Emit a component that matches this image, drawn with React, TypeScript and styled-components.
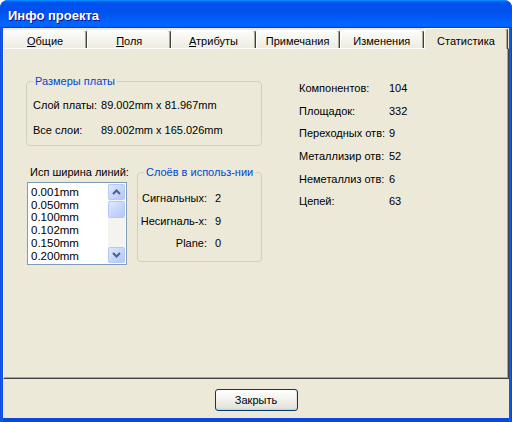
import React from 'react';
import styled, { createGlobalStyle } from 'styled-components';

const GlobalStyle = createGlobalStyle`
  html, body {
    margin: 0;
    padding: 0;
    background: #ffffff;
  }
  body {
    font-family: "Liberation Sans", Arial, sans-serif;
    font-size: 11px;
    color: #000;
    white-space: nowrap;
  }
`;

const Window = styled.div`
  width: 512px;
  height: 422px;
  display: flex;
  flex-direction: column;
  background: linear-gradient(90deg, #0831d9 0, #166aee 1px, #0a46e0 3px, #0a46e0 509px, #166aee 510px, #0831d9 512px);
  border-radius: 8px 8px 0 0;
  overflow: hidden;
`;

const TitleBar = styled.div`
  height: 28px;
  flex: none;
  display: flex;
  align-items: center;
  padding-left: 8px;
  background: linear-gradient(180deg, #0997ff, #0053ee 8%, #0050ee 40%, #0066ff 88%, #0066ff 93%, #005bff 95%, #003dd7 96%, #003dd7);
`;

const Title = styled.span`
  font-family: "Liberation Sans", Arial, sans-serif;
  font-weight: bold;
  font-size: 13px;
  color: #fff;
  text-shadow: 1px 1px #0f1089;
  margin-top: 2px;
`;

const Body = styled.div`
  flex: 1;
  margin: 0 3px 4px 3px;
  background: #ece9d8;
  display: flex;
  flex-direction: column;
`;

const TabStrip = styled.div`
  height: 20px;
  flex: none;
  display: flex;
  align-items: flex-end;
  padding-right: 1px;
  position: relative;
  z-index: 1;
`;

const Tab = styled.div<{ $active?: boolean }>`
  flex: 1;
  box-sizing: border-box;
  height: ${(p) => (p.$active ? 21 : 18)}px;
  margin-bottom: ${(p) => (p.$active ? -1 : 0)}px;
  padding-top: ${(p) => (p.$active ? 5 : 3)}px;
  text-align: center;
  line-height: 14px;
  border-left: 1px solid #fff;
  border-top: 1px solid #fff;
  border-right: 1px solid #404040;
  border-radius: 3px 3px 0 0;
  box-shadow: inset -1px 0 #aca899;
  background: ${(p) => (p.$active ? '#ece9d8' : 'linear-gradient(180deg, #fcfcfa, #eeece2)')};
`;

const Key = styled.span`
  text-decoration: underline;
`;

const Panel = styled.div`
  height: 331px;
  flex: none;
  box-sizing: border-box;
  border-top: 1px solid #fff;
  border-left: 1px solid #fff;
  border-right: 1px solid #404040;
  border-bottom: 1px solid #404040;
  box-shadow: inset -1px -1px #aca899;
  display: grid;
  grid-template-columns: 236px auto;
  column-gap: 37px;
  align-items: start;
  padding: 26px 0 0 22px;
`;

const LeftColumn = styled.div`
  display: flex;
  flex-direction: column;
`;

const GroupBox = styled.fieldset<{ $width: number; $height: number }>`
  margin: 0;
  min-width: 0;
  box-sizing: border-box;
  width: ${(p) => p.$width}px;
  height: ${(p) => p.$height}px;
  border: 1px solid #d0d0bf;
  border-radius: 4px;
  padding: 0;
`;

const Legend = styled.legend`
  color: #0046d5;
  line-height: 13px;
  padding: 0 2px;
  margin-left: 6px;
`;

const BoardRows = styled.div`
  display: flex;
  flex-direction: column;
  gap: 12px;
  padding: 11px 0 0 6px;
`;

const BoardRow = styled.div<{ $valueAt: number }>`
  display: grid;
  grid-template-columns: minmax(${(p) => p.$valueAt - 4}px, auto) auto;
  justify-content: start;
  column-gap: 4px;
  line-height: 13px;
`;

const LowerRow = styled.div`
  display: flex;
  gap: 10px;
  margin-top: 20px;
  margin-left: 1px;
`;

const WidthsBlock = styled.div`
  width: 100px;
  display: flex;
  flex-direction: column;
  gap: 3px;
`;

const FieldLabel = styled.div`
  line-height: 13px;
  padding-left: 3px;
`;

const ListBox = styled.div`
  width: 100px;
  height: 83px;
  box-sizing: border-box;
  border: 1px solid #7f9db9;
  background: #fff;
  display: flex;
`;

const ListItems = styled.div`
  flex: 1;
  padding: 3px 0 0 3px;
  overflow: hidden;
`;

const ListItem = styled.div`
  line-height: 12.7px;
  font-size: 11.5px;
`;

const ScrollBar = styled.div`
  width: 17px;
  margin: 1px 1px 1px 0;
  background: #f4f3ee;
  display: flex;
  flex-direction: column;
  justify-content: space-between;
`;

const ScrollTop = styled.div`
  display: flex;
  flex-direction: column;
  gap: 1px;
`;

const ScrollButton = styled.div`
  height: 16px;
  box-sizing: border-box;
  border: 1px solid #b6c9f5;
  border-radius: 2px;
  background: linear-gradient(135deg, #dfe8fd, #c3d3fb 60%, #b4c6f4);
  display: flex;
  align-items: center;
  justify-content: center;
`;

const Thumb = styled(ScrollButton)`
  height: 17px;
`;

const StatTable = styled.div`
  display: grid;
  grid-template-columns: 90px auto;
  row-gap: 9.7px;
  line-height: 13px;
  padding-top: 7px;
`;

const LayerRows = styled.div`
  display: grid;
  grid-template-columns: 63px auto;
  column-gap: 8px;
  row-gap: 9.5px;
  line-height: 13px;
  padding: 13px 0 0 6px;
`;

const RightLabel = styled.span`
  justify-self: end;
  text-align: right;
`;

const Footer = styled.div`
  flex: 1;
  display: flex;
  justify-content: center;
  align-items: flex-start;
  padding-top: 10px;
`;

const Button = styled.button`
  width: 83px;
  height: 22px;
  font-family: "Liberation Sans", Arial, sans-serif;
  font-size: 11px;
  color: #000;
  border: 1px solid #003c74;
  border-radius: 3px;
  background: linear-gradient(180deg, #ffffff, #f4f4f0 40%, #e3e2da 90%, #d6d0c5);
  box-shadow: inset 0 -1px #d6d0c5, inset -1px 0 #e3e2da;
  padding: 0;
`;

const Chevron = ({ up }: { up?: boolean }) => (
  <svg width="9" height="6" viewBox="0 0 9 6">
    <path
      d={up ? 'M1 5 L4.5 1.5 L8 5' : 'M1 1 L4.5 4.5 L8 1'}
      fill="none"
      stroke="#4d6185"
      strokeWidth="2"
    />
  </svg>
);

const widths = ['0.001mm', '0.050mm', '0.100mm', '0.102mm', '0.150mm', '0.200mm'];

const stats = [
  ['Компонентов:', '104'],
  ['Площадок:', '332'],
  ['Переходных отв:', '9'],
  ['Металлизир отв:', '52'],
  ['Неметаллиз отв:', '6'],
  ['Цепей:', '63'],
];

export default function App() {
  return (
    <>
      <GlobalStyle />
      <Window>
        <TitleBar>
          <Title>Инфо проекта</Title>
        </TitleBar>
        <Body>
          <TabStrip>
            <Tab><Key>О</Key>бщие</Tab>
            <Tab><Key>П</Key>оля</Tab>
            <Tab><Key>А</Key>трибуты</Tab>
            <Tab>Примечания</Tab>
            <Tab>Изменения</Tab>
            <Tab $active>Статистика</Tab>
          </TabStrip>
          <Panel>
            <LeftColumn>
              <GroupBox $width={236} $height={71}>
                <Legend>Размеры платы</Legend>
                <BoardRows>
                  <BoardRow $valueAt={64}>
                    <span>Слой платы:</span>
                    <span>89.002mm x 81.967mm</span>
                  </BoardRow>
                  <BoardRow $valueAt={68}>
                    <span>Все слои:</span>
                    <span>89.002mm x 165.026mm</span>
                  </BoardRow>
                </BoardRows>
              </GroupBox>
              <LowerRow>
                <WidthsBlock>
                  <FieldLabel>Исп ширина линий:</FieldLabel>
                  <ListBox>
                    <ListItems>
                      {widths.map((w) => (
                        <ListItem key={w}>{w}</ListItem>
                      ))}
                    </ListItems>
                    <ScrollBar>
                      <ScrollTop>
                        <ScrollButton><Chevron up /></ScrollButton>
                        <Thumb />
                      </ScrollTop>
                      <ScrollButton><Chevron /></ScrollButton>
                    </ScrollBar>
                  </ListBox>
                </WidthsBlock>
                <GroupBox $width={125} $height={96}>
                  <Legend>Слоёв в использ-нии</Legend>
                  <LayerRows>
                    <RightLabel>Сигнальных:</RightLabel>
                    <span>2</span>
                    <RightLabel>Несигналь-х:</RightLabel>
                    <span>9</span>
                    <RightLabel>Plane:</RightLabel>
                    <span>0</span>
                  </LayerRows>
                </GroupBox>
              </LowerRow>
            </LeftColumn>
            <StatTable>
              {stats.map(([label, value]) => (
                <React.Fragment key={label}>
                  <span>{label}</span>
                  <span>{value}</span>
                </React.Fragment>
              ))}
            </StatTable>
          </Panel>
          <Footer>
            <Button>Закрыть</Button>
          </Footer>
        </Body>
      </Window>
    </>
  );
}
